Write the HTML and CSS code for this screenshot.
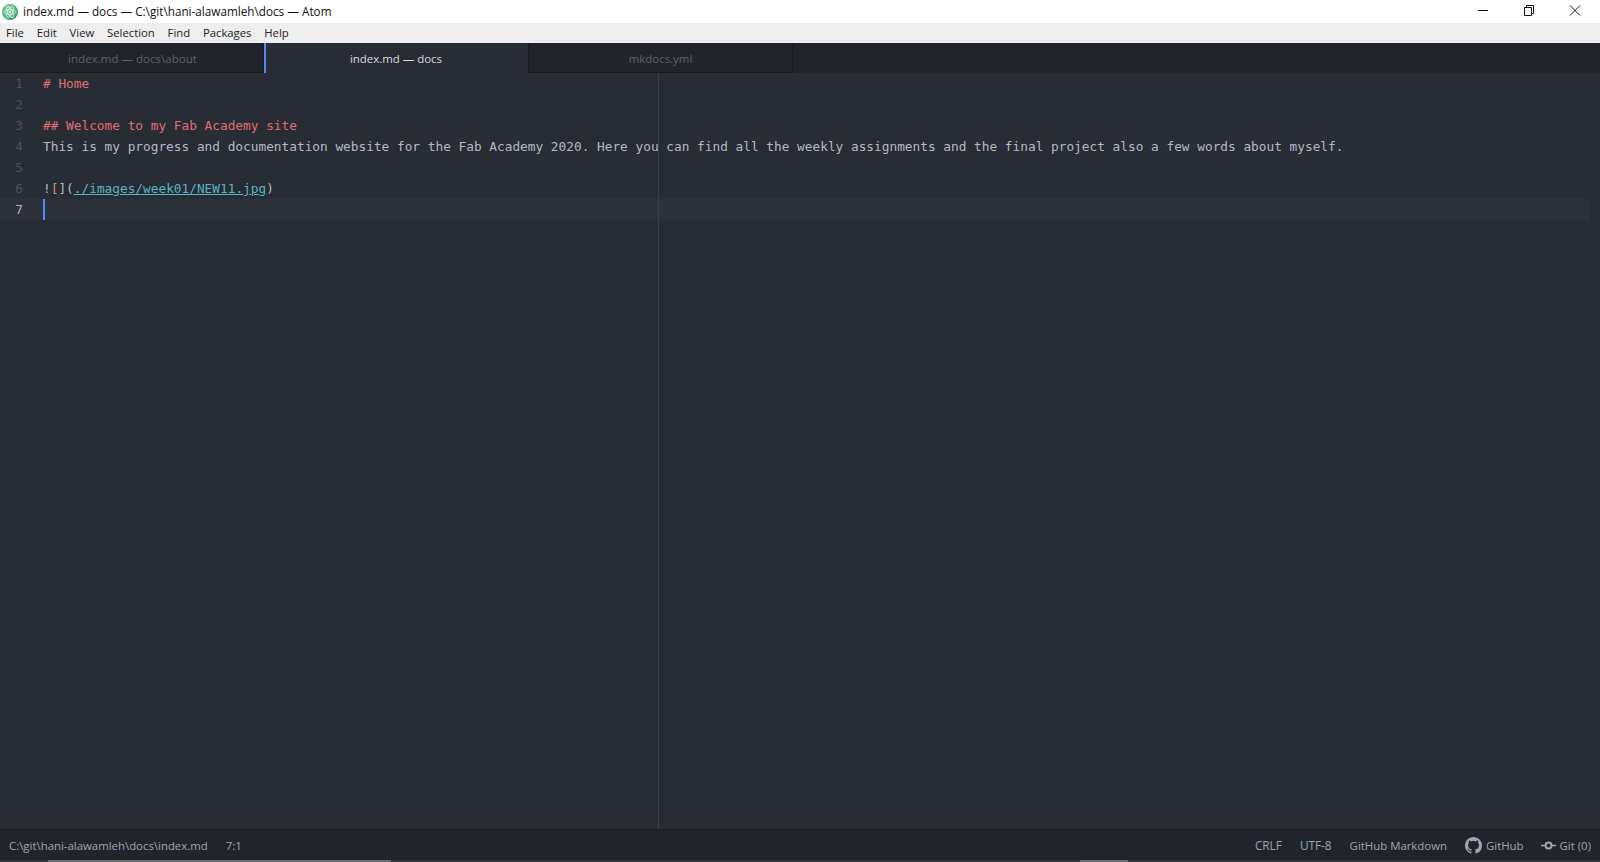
FILE: index.html
```html
<!DOCTYPE html>
<html lang="en">
<head>
<meta charset="utf-8">
<title>index.md — docs — C:\git\hani-alawamleh\docs — Atom</title>
<link rel="stylesheet" href="styles.css">
</head>
<body>
<div class="app">
  <header class="titlebar">
    <svg class="atom-logo" viewBox="0 0 16 16" width="16" height="16">
      <defs><radialGradient id="g" cx="40%" cy="35%" r="70%"><stop offset="0" stop-color="#8fd6a4"/><stop offset="1" stop-color="#2f9a68"/></radialGradient></defs>
      <circle cx="8" cy="8" r="8" fill="url(#g)"/>
      <g fill="none" stroke="#d6f0dc" stroke-width="0.9">
        <ellipse cx="8" cy="8" rx="6" ry="2.4"/>
        <ellipse cx="8" cy="8" rx="6" ry="2.4" transform="rotate(60 8 8)"/>
        <ellipse cx="8" cy="8" rx="6" ry="2.4" transform="rotate(120 8 8)"/>
      </g>
      <circle cx="8" cy="8" r="1.1" fill="#e4f6e8"/>
    </svg>
    <span class="title-text">index.md — docs — C:\git\hani-alawamleh\docs — Atom</span>
    <div class="win-controls">
      <svg class="win-btn" viewBox="0 0 46 23" width="46" height="23"><path d="M18 10.5h10" stroke="#111" fill="none"/></svg>
      <svg class="win-btn" viewBox="0 0 46 23" width="46" height="23"><path d="M18.5 7.5h7v8h-7zM20.5 7.5v-2h7v8h-2" stroke="#111" fill="none"/></svg>
      <svg class="win-btn" viewBox="0 0 46 23" width="46" height="23"><path d="M18 5.5l10 10M28 5.5l-10 10" stroke="#111" fill="none"/></svg>
    </div>
  </header>
  <nav class="menubar">
    <span class="menu-item">File</span>
    <span class="menu-item">Edit</span>
    <span class="menu-item">View</span>
    <span class="menu-item">Selection</span>
    <span class="menu-item">Find</span>
    <span class="menu-item">Packages</span>
    <span class="menu-item">Help</span>
  </nav>
  <div class="tabs">
    <div class="tab tab-first">index.md — docs\about</div>
    <div class="tab tab-active">index.md — docs</div>
    <div class="tab tab-last">mkdocs.yml</div>
  </div>
  <main class="editor">
    <div class="line"><span class="num">1</span><span class="code heading"># Home</span></div>
    <div class="line"><span class="num">2</span><span class="code"></span></div>
    <div class="line"><span class="num">3</span><span class="code heading">## Welcome to my Fab Academy site</span></div>
    <div class="line"><span class="num">4</span><span class="code">This is my progress and documentation website for the Fab Academy 2020. Here you can find all the weekly assignments and the final project also a few words about myself.</span></div>
    <div class="line"><span class="num">5</span><span class="code"></span></div>
    <div class="line"><span class="num">6</span><span class="code">!<span class="bracket">[</span>](<span class="link">./images/week01/NEW11.jpg</span>)</span></div>
    <div class="line line-current"><span class="num">7</span><span class="code"><span class="cursor"></span></span></div>
    <div class="wrap-guide"></div>
  </main>
  <footer class="status">
    <div class="status-left">
      <span>C:\git\hani-alawamleh\docs\index.md</span>
      <span>7:1</span>
    </div>
    <div class="status-right">
      <span class="status-caps">CRLF</span>
      <span class="status-caps">UTF-8</span>
      <span>GitHub Markdown</span>
      <span class="status-icon">
        <svg viewBox="0 0 16 16" width="17" height="17"><path fill="#9da5b4" d="M8 0C3.58 0 0 3.58 0 8c0 3.54 2.29 6.53 5.47 7.59.4.07.55-.17.55-.38 0-.19-.01-.82-.01-1.49-2.01.37-2.53-.49-2.69-.94-.09-.23-.48-.94-.82-1.13-.28-.15-.68-.52-.01-.53.63-.01 1.08.58 1.23.82.72 1.21 1.87.87 2.33.66.07-.52.28-.87.51-1.07-1.78-.2-3.64-.89-3.64-3.95 0-.87.31-1.59.82-2.15-.08-.2-.36-1.02.08-2.12 0 0 .67-.21 2.2.82.64-.18 1.32-.27 2-.27s1.36.09 2 .27c1.53-1.04 2.2-.82 2.2-.82.44 1.1.16 1.92.08 2.12.51.56.82 1.27.82 2.15 0 3.07-1.87 3.75-3.65 3.95.29.25.54.73.54 1.48 0 1.07-.01 1.93-.01 2.2 0 .21.15.46.55.38A8.01 8.01 0 0 0 16 8c0-4.42-3.58-8-8-8z"/></svg>
        GitHub
      </span>
      <span class="status-icon status-git">
        <svg viewBox="0 0 15 9" width="15" height="9"><circle cx="7.5" cy="4.5" r="3" fill="none" stroke="#9da5b4" stroke-width="2"/><path d="M0 4.5h4M11 4.5h4" stroke="#9da5b4" stroke-width="1.5"/></svg>
        Git (0)
      </span>
    </div>
  </footer>
  <div class="hscroll">
    <div class="thumb thumb-a"></div>
    <div class="thumb thumb-b"></div>
  </div>
</div>
</body>
</html>
```
FILE: styles.css
```css
* { box-sizing: border-box; }
html, body { margin: 0; height: 100%; overflow: hidden; }
body { font-family: "Open Sans", "Noto Sans", sans-serif; }
.app { display: flex; flex-direction: column; height: 862px; width: 1600px; background: #282c34; }

.titlebar { height: 23px; background: #fff; display: flex; align-items: center; padding-left: 2px; color: #111; font-size: 11.72px; }
.atom-logo { flex: none; margin-right: 5px; }
.title-text { white-space: nowrap; margin-top: -2px; }
.win-controls { margin-left: auto; display: flex; margin-right: 2px; }
.win-btn { display: block; }

.menubar { height: 20px; background: #eeeeee; display: flex; align-items: center; padding: 0 0 2px 6px; gap: 12.8px; font-size: 11.3px; color: #222; }

.tabs { height: 30px; background: #21252b; display: flex; font-size: 11.45px; }
.tab { width: 264px; padding-top: 1px; display: flex; align-items: center; justify-content: center; color: #5c6370; border-bottom: 1px solid #181a1f; border-right: 1px solid #181a1f; }
.tab-first { padding-left: 2px; font-size: 11.55px; }
.tab-active { padding: 0 2px 0 0; background: #282c34; color: #d7dae0; border-bottom: 0; border-right: 0; border-left: 2px solid #568af2; }
.tab-last { width: 265px; border-left: 1px solid #181a1f; }

.editor { flex: 1; position: relative; background: #282c34; font-family: "DejaVu Sans Mono", monospace; font-size: 12.795px; color: #b3bac7; min-height: 0; }
.line { height: 21px; line-height: 21px; display: flex; white-space: pre; margin-right: 10px; }
.num { width: 43px; flex: none; padding-right: 20px; text-align: right; color: #4b5263; }
.code { flex: 1; }
.heading { color: #e06c75; }
.bracket { color: #d19a66; }
.link { color: #56b6c2; text-decoration: underline; }
.line-current { background: #2c313a; }
.line-current .num { color: #abb2bf; }
.cursor { display: inline-block; width: 2px; height: 21px; background: #528bff; vertical-align: top; }
.wrap-guide { position: absolute; left: 658px; top: 0; bottom: 0; width: 1px; background: #3a3f4b; }

.status { height: 31px; background: #21252b; border-top: 1px solid #181a1f; display: flex; justify-content: space-between; align-items: center; padding: 0 9px; font-size: 11.4px; color: #9da5b4; }
.status-left { display: flex; gap: 18px; }
.status-right { display: flex; gap: 18px; align-items: center; }
.status-caps { font-size: 11.8px; }
.status-icon { display: flex; align-items: center; gap: 4px; }
.status-git { margin-left: -1px; }

.hscroll { height: 2px; background: #33363b; display: flex; }
.thumb { height: 2px; background: #6a6c70; }
.thumb-a { width: 343px; margin-left: 48px; }
.thumb-b { width: 48px; margin-left: 689px; }
```
